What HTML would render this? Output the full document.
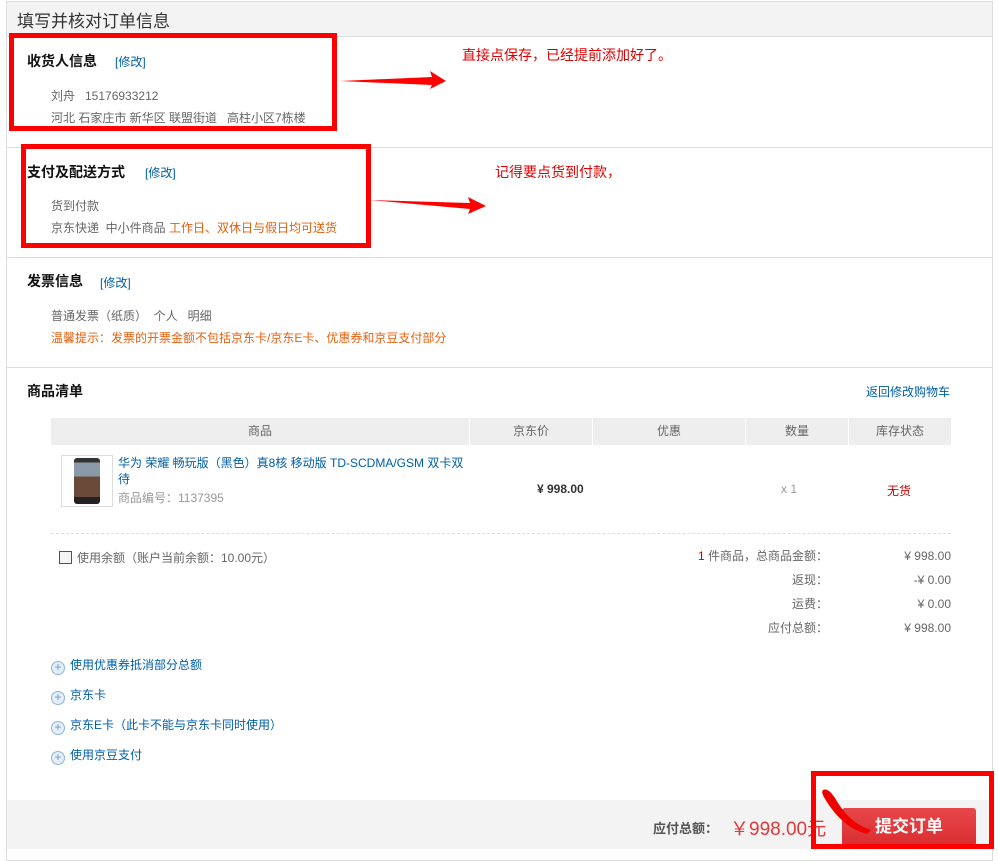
<!DOCTYPE html>
<html><head><meta charset="utf-8"><style>
*{margin:0;padding:0;box-sizing:border-box}
body{width:998px;height:849px;background:#fff;font-family:"Liberation Sans","Noto Sans CJK SC",sans-serif;font-size:12px;color:#666;position:relative;overflow:hidden}
.a{position:absolute;white-space:nowrap}
.wrap{position:absolute;left:6px;top:1px;width:987px;height:860px;border:1px solid #ddd}
.hl{position:absolute;left:7px;width:985px;height:1px;background:#ddd}
.t{font-size:14px;font-weight:bold;color:#111}
.lk{color:#005ea7}
.rb{position:absolute;border:5px solid #f00}
.th{position:absolute;top:418px;height:27px;background:#eee;text-align:center;line-height:27px;color:#666}
.plus{display:inline-block;width:14px;height:14px;border:1px solid #8fb4d6;border-radius:50%;background:#e3eef8;color:#6a9cc8;font-size:12px;line-height:11px;text-align:center;vertical-align:-2px;margin-right:5px}
</style></head><body>
<div class="wrap"></div>
<div class="a" style="left:7px;top:2px;width:985px;height:35px;background:#f3f3f3;border-bottom:1px solid #ddd"></div>
<div class="a" style="left:17px;top:7px;font-size:17px;color:#333">填写并核对订单信息</div>

<div class="a t" style="left:27px;top:51px">收货人信息</div>
<div class="a lk" style="left:115px;top:53px">[修改]</div>
<div class="a" style="left:51px;top:87px">刘舟&nbsp;&nbsp; 15176933212</div>
<div class="a" style="left:51px;top:109px">河北 石家庄市 新华区 联盟街道&nbsp;&nbsp; 高柱小区7栋楼</div>
<div class="rb" style="left:9px;top:33px;width:328px;height:98px"></div>
<div class="a" style="left:462px;top:45px;font-size:14px;color:#d00">直接点保存，已经提前添加好了。</div>
<svg class="a" style="left:340px;top:70px" width="110" height="22"><polygon points="0,11 92,7 90,1 106,11 90,19 92,15" fill="#f00"/></svg>

<div class="hl" style="top:147px"></div>
<div class="a t" style="left:27px;top:162px">支付及配送方式</div>
<div class="a lk" style="left:145px;top:164px">[修改]</div>
<div class="a" style="left:51px;top:197px">货到付款</div>
<div class="a" style="left:51px;top:219px">京东快递&nbsp; 中小件商品 <span style="color:#e4600e">工作日、双休日与假日均可送货</span></div>
<div class="rb" style="left:21px;top:144px;width:350px;height:104px"></div>
<div class="a" style="left:495px;top:162px;font-size:14px;color:#d00">记得要点货到付款，</div>
<svg class="a" style="left:370px;top:194px" width="120" height="22"><polygon points="0,6 100,9 98,3 116,12 98,20 100,15" fill="#f00"/></svg>

<div class="hl" style="top:257px"></div>
<div class="a t" style="left:27px;top:271px">发票信息</div>
<div class="a lk" style="left:100px;top:274px">[修改]</div>
<div class="a" style="left:51px;top:307px">普通发票（纸质）&nbsp; 个人&nbsp;&nbsp; 明细</div>
<div class="a" style="left:51px;top:329px;color:#e4600e">温馨提示：发票的开票金额不包括京东卡/京东E卡、优惠券和京豆支付部分</div>

<div class="hl" style="top:367px"></div>
<div class="a t" style="left:27px;top:381px">商品清单</div>
<div class="a lk" style="left:866px;top:383px">返回修改购物车</div>
<div class="th" style="left:51px;width:418px">商品</div>
<div class="th" style="left:470px;width:122px">京东价</div>
<div class="th" style="left:593px;width:152px">优惠</div>
<div class="th" style="left:746px;width:102px">数量</div>
<div class="th" style="left:849px;width:102px">库存状态</div>
<div class="a" style="left:61px;top:455px;width:52px;height:52px;border:1px solid #ddd"><div style="margin:2px auto;width:26px;height:46px;background:linear-gradient(#333 0 10%,#8a9aa8 10% 40%,#6b4a3a 40% 85%,#222 85%);border-radius:3px"></div></div>
<div class="a lk" style="left:118px;top:455px;white-space:normal;width:350px;line-height:16px">华为 荣耀 畅玩版（黑色）真8核 移动版 TD-SCDMA/GSM 双卡双<br>待</div>
<div class="a" style="left:118px;top:489px;color:#999">商品编号：1137395</div>
<div class="a" style="left:537px;top:482px;font-weight:bold;color:#333">¥ 998.00</div>
<div class="a" style="left:781px;top:482px;color:#999">x 1</div>
<div class="a" style="left:887px;top:482px;color:#c00">无货</div>
<div class="a" style="left:51px;top:533px;width:900px;border-top:1px dashed #ddd"></div>

<div class="a" style="left:59px;top:551px;width:13px;height:13px;border:1px solid #456;background:#f4f4f4"></div>
<div class="a" style="left:77px;top:549px">使用余额（账户当前余额：10.00元）</div>
<div class="a" style="left:600px;top:544px;width:228px;text-align:right;line-height:24px;color:#666"><span style="color:#c00">1</span> 件商品，总商品金额：<br>返现：<br>运费：<br>应付总额：</div>
<div class="a" style="left:850px;top:544px;width:101px;text-align:right;line-height:24px;color:#666">¥ 998.00<br>-¥ 0.00<br>¥ 0.00<br>¥ 998.00</div>

<div class="a lk" style="left:51px;top:656px"><span class="plus">+</span>使用优惠券抵消部分总额</div>
<div class="a lk" style="left:51px;top:686px"><span class="plus">+</span>京东卡</div>
<div class="a lk" style="left:51px;top:716px"><span class="plus">+</span>京东E卡（此卡不能与京东卡同时使用）</div>
<div class="a lk" style="left:51px;top:746px"><span class="plus">+</span>使用京豆支付</div>

<div class="a" style="left:7px;top:800px;width:985px;height:49px;background:#f3f3f3"></div>
<div class="a" style="left:653px;top:818px;font-size:13px;font-weight:bold;color:#555">应付总额：</div>
<div class="a" style="left:730px;top:814px;font-size:19px;color:#e4393c">￥998.00元</div>
<div class="a" style="left:842px;top:808px;width:134px;height:38px;background:linear-gradient(#e8474a,#d92d30);border-radius:3px;color:#fff;font-size:17px;font-weight:bold;text-align:center;line-height:38px">提交订单</div>
<svg class="a" style="left:815px;top:780px" width="80" height="70"><path d="M8,10 C12,8 16,12 20,18 C28,32 38,44 56,50 L52,54 C36,50 22,38 12,22 C8,16 6,12 8,10Z" fill="#e00"/></svg>
<div class="rb" style="left:811px;top:771px;width:183px;height:78px"></div>
</body></html>
